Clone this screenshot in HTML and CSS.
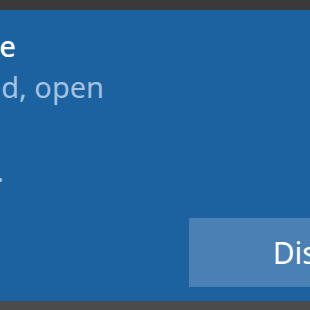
FILE: index.html
```html
<!DOCTYPE html>
<html lang="en">
<head>
<meta charset="utf-8">
<title>Toast</title>
<link rel="stylesheet" href="styles.css">
</head>
<body>
<div class="screen">
  <div class="topbar"></div>
  <div class="toast">
    <div class="line line-title"><span>Windows Update</span></div>
    <div class="line line-body2"><span>To finish installing updates you need, open</span></div>
    <div class="line line-body3"><span>Settings and choose a time to restart your</span></div>
    <div class="line line-body4"><span>device when it suits you.</span></div>
    <button class="btn" type="button">Dismiss</button>
  </div>
  <div class="bottombar"></div>
</div>
</body>
</html>
```
FILE: styles.css
```css
html, body {
  margin: 0;
  padding: 0;
  background: #4b4b4b;
}
.screen {
  width: 310px;
  height: 310px;
  display: flex;
  flex-direction: column;
  overflow: hidden;
  font-family: "Noto Sans", "Open Sans", sans-serif;
}
.topbar {
  height: 10px;
  background: #3a3a3a;
  flex: none;
}
.toast {
  flex: 1;
  background: #1c62a0;
  display: flex;
  flex-direction: column;
  padding: 16px 0 14px 0;
  overflow: hidden;
}
.bottombar {
  height: 9px;
  background: #4b4b4b;
  flex: none;
}
.line {
  display: flex;
  justify-content: flex-end;
  white-space: nowrap;
  font-size: 29px;
  line-height: 42px;
  color: #a3c3e1;
}
.line-title {
  width: 16px;
  line-height: 40px;
  color: #ffffff;
  font-weight: 500;
}
.line-body2 { width: 104px; }
.line-body3 { width: 0; }
.line-body4 { width: 4px; }
.btn {
  margin-top: auto;
  align-self: flex-end;
  margin-right: -155px;
  width: 276px;
  height: 69px;
  border: none;
  padding: 0;
  background: #4a80b4;
  color: #ffffff;
  font-family: "Noto Sans", "Open Sans", sans-serif;
  font-size: 30px;
  flex: none;
}
```
